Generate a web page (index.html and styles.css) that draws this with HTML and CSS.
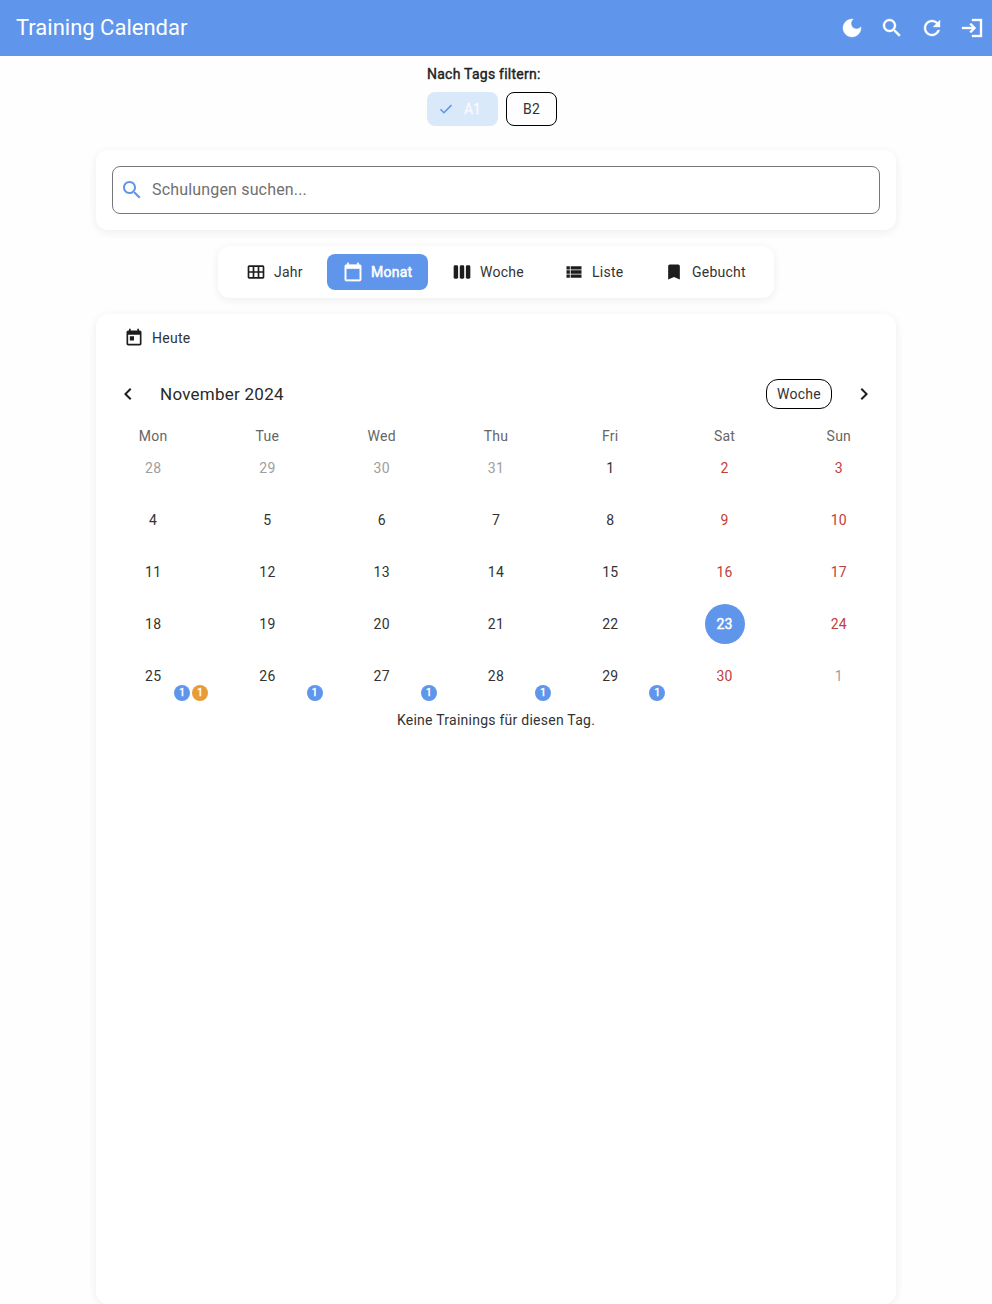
FILE: index.html
```html
<!DOCTYPE html>
<html lang="de">
<head>
<meta charset="utf-8">
<title>Training Calendar</title>
<link rel="stylesheet" href="styles.css">
</head>
<body>
<header class="appbar">
  <h1 class="title">Training Calendar</h1>
  <nav class="actions">
    <svg class="icon24" viewBox="0 0 24 24"><path d="M12 3c-4.97 0-9 4.03-9 9s4.03 9 9 9 9-4.03 9-9c0-.46-.04-.92-.1-1.36-.98 1.37-2.58 2.26-4.4 2.26-2.98 0-5.4-2.42-5.4-5.4 0-1.81.89-3.42 2.26-4.4-.44-.06-.9-.1-1.36-.1z"/></svg>
    <svg class="icon24" viewBox="0 0 24 24"><path d="M15.5 14h-.79l-.28-.27C15.41 12.59 16 11.11 16 9.5 16 5.91 13.09 3 9.5 3S3 5.91 3 9.5 5.91 16 9.5 16c1.61 0 3.09-.59 4.23-1.57l.27.28v.79l5 4.99L20.49 19l-4.99-5zm-6 0C7.01 14 5 11.99 5 9.5S7.01 5 9.5 5 14 7.01 14 9.5 11.99 14 9.5 14z"/></svg>
    <svg class="icon24" viewBox="0 0 24 24"><path d="M17.65 6.35C16.2 4.9 14.21 4 12 4c-4.42 0-7.99 3.58-7.99 8s3.57 8 7.99 8c3.73 0 6.84-2.55 7.73-6h-2.08c-.82 2.33-3.04 4-5.65 4-3.31 0-6-2.69-6-6s2.69-6 6-6c1.66 0 3.14.69 4.22 1.78L13 11h7V4l-2.35 2.35z"/></svg>
    <svg class="icon24" viewBox="0 0 24 24"><path d="M11 7L9.6 8.4l2.6 2.6H2v2h10.2l-2.6 2.6L11 17l5-5-5-5zm9 12h-8v2h10V3H12v2h8v14z"/></svg>
  </nav>
</header>
<main class="content">
  <section class="tags">
    <div class="tags-label">Nach Tags filtern:</div>
    <div class="chips">
      <span class="chip selected"><svg class="check" viewBox="0 0 18 18"><path d="M3.5 9.3l3.4 3.4 7.6-7.6"/></svg><span>A1</span></span>
      <span class="chip">B2</span>
    </div>
  </section>
  <section class="card search-card">
    <div class="search">
      <svg class="icon24" viewBox="0 0 24 24"><path d="M15.5 14h-.79l-.28-.27C15.41 12.59 16 11.11 16 9.5 16 5.91 13.09 3 9.5 3S3 5.91 3 9.5 5.91 16 9.5 16c1.61 0 3.09-.59 4.23-1.57l.27.28v.79l5 4.99L20.49 19l-4.99-5zm-6 0C7.01 14 5 11.99 5 9.5S7.01 5 9.5 5 14 7.01 14 9.5 11.99 14 9.5 14z"/></svg>
      <span>Schulungen suchen...</span>
    </div>
  </section>
  <nav class="card views">
    <span class="view jahr"><svg class="icon20" viewBox="0 0 24 24"><path d="M20 4H4c-1.1 0-2 .9-2 2v12c0 1.1.9 2 2 2h16c1.1 0 2-.9 2-2V6c0-1.1-.9-2-2-2zM8 11H4V6h4v5zm6 0h-4V6h4v5zm6 0h-4V6h4v5zM8 18H4v-5h4v5zm6 0h-4v-5h4v5zm6 0h-4v-5h4v5z"/></svg>Jahr</span>
    <span class="view active"><svg class="icon20" viewBox="0 0 24 24"><path d="M20 3h-1V1h-2v2H7V1H5v2H4c-1.1 0-2 .9-2 2v16c0 1.1.9 2 2 2h16c1.1 0 2-.9 2-2V5c0-1.1-.9-2-2-2zm0 18H4V8h16v13z"/></svg>Monat</span>
    <span class="view woche"><svg class="icon20" viewBox="0 0 24 24"><rect x="2" y="4" width="5.33" height="16" rx="1.6"/><rect x="9.33" y="4" width="5.33" height="16" rx="1.6"/><rect x="16.67" y="4" width="5.33" height="16" rx="1.6"/></svg>Woche</span>
    <span class="view liste"><svg class="icon20" viewBox="0 0 24 24"><path d="M3 14h4v-4H3v4zm0 5h4v-4H3v4zM3 9h4V5H3v4zm5 5h13v-4H8v4zm0 5h13v-4H8v4zM8 5v4h13V5H8z"/></svg>Liste</span>
    <span class="view gebucht"><svg class="icon20" viewBox="0 0 24 24"><path d="M17 3H7c-1.1 0-1.99.9-1.99 2L5 21l7-3 7 3V5c0-1.1-.9-2-2-2z"/></svg>Gebucht</span>
  </nav>
  <section class="card calendar">
    <div class="today"><svg class="icon20" viewBox="0 0 24 24"><path d="M19 3h-1V1h-2v2H8V1H6v2H5c-1.11 0-1.99.9-1.99 2L3 19c0 1.1.89 2 2 2h14c1.1 0 2-.9 2-2V5c0-1.1-.9-2-2-2zm0 16H5V8h14v11zM7 10h5v5H7z"/></svg>Heute</div>
    <div class="month-bar">
      <svg class="icon24" viewBox="0 0 24 24"><path d="M15.41 7.41L14 6l-6 6 6 6 1.41-1.41L10.83 12z"/></svg>
      <h2 class="month">November 2024</h2>
      <span class="format">Woche</span>
      <svg class="icon24" viewBox="0 0 24 24"><path d="M10 6L8.59 7.41 13.17 12l-4.58 4.59L10 18l6-6z"/></svg>
    </div>
    <div class="grid weekdays"><span>Mon</span><span>Tue</span><span>Wed</span><span>Thu</span><span>Fri</span><span>Sat</span><span>Sun</span></div>
    <div class="grid days">
      <span class="day out">28</span><span class="day out">29</span><span class="day out">30</span><span class="day out">31</span><span class="day">1</span><span class="day we">2</span><span class="day we">3</span>
      <span class="day">4</span><span class="day">5</span><span class="day">6</span><span class="day">7</span><span class="day">8</span><span class="day we">9</span><span class="day we">10</span>
      <span class="day">11</span><span class="day">12</span><span class="day">13</span><span class="day">14</span><span class="day">15</span><span class="day we">16</span><span class="day we">17</span>
      <span class="day">18</span><span class="day">19</span><span class="day">20</span><span class="day">21</span><span class="day">22</span><span class="day"><b class="current">23</b></span><span class="day we">24</span>
      <span class="day">25<span class="markers"><i class="dot">1</i><i class="dot orange">1</i></span></span><span class="day">26<span class="markers"><i class="dot">1</i></span></span><span class="day">27<span class="markers"><i class="dot">1</i></span></span><span class="day">28<span class="markers"><i class="dot">1</i></span></span><span class="day">29<span class="markers"><i class="dot">1</i></span></span><span class="day we">30</span><span class="day out">1</span>
    </div>
    <p class="empty">Keine Trainings für diesen Tag.</p>
  </section>
</main>
</body>
</html>
```
FILE: styles.css
```css
* { box-sizing: border-box; }
body {
  margin: 0;
  height: 1304px;
  overflow: hidden;
  background: #fefefe;
  color: #333;
  font: 14px/20px Roboto, sans-serif;
  letter-spacing: 0.25px;
}
svg { display: block; flex: none; fill: #1d1d1d; }
.icon24 { width: 24px; height: 24px; }
.icon20 { width: 20px; height: 20px; }
.appbar {
  height: 56px;
  padding: 0 8px 0 16px;
  display: flex;
  align-items: center;
  justify-content: space-between;
  background: #5f96eb;
  color: #fff;
}
.title { margin: 0; font-size: 22px; line-height: 28px; font-weight: 400; letter-spacing: 0; }
.actions { display: flex; gap: 16px; }
.actions svg { fill: #fff; stroke: #fff; stroke-width: 0.35; }
.content { display: flex; flex-direction: column; align-items: center; }
.tags { width: 138px; height: 94px; padding-top: 8px; }
.tags-label { white-space: nowrap; -webkit-text-stroke: 0.4px; color: #212121; }
.chips { display: flex; gap: 8px; margin-top: 8px; }
.chip {
  display: flex;
  align-items: center;
  justify-content: center;
  width: 51px;
  height: 34px;
  border: 1px solid #000;
  border-radius: 8px;
  letter-spacing: 0.1px;
}
.chip.selected { width: 71px; border: 0; background: #dae9fa; color: #f8fbff; gap: 9px; -webkit-text-stroke: 0.3px; padding-right: 7px; }
.check { width: 18px; height: 18px; fill: none; stroke: #5f96eb; stroke-width: 1.6; }
.card { background: #fff; border-radius: 12px; box-shadow: 0 2px 10px rgba(0, 0, 0, 0.07); }
.search-card { width: 800px; height: 80px; padding: 16px; }
.search {
  height: 48px;
  border: 1px solid #777;
  border-radius: 8px;
  display: flex;
  align-items: center;
  gap: 8px;
  padding: 0 7px;
  color: #707070;
  font-size: 16px;
  letter-spacing: 0.17px;
}
.search svg { fill: #5f96eb; }
.views { display: flex; width: 556px; height: 52px; margin: 16px 0; padding: 8px; gap: 8px; }
.view { display: flex; align-items: center; gap: 8px; height: 36px; padding-left: 16px; border-radius: 8px; }
.jahr { width: 93px; padding-left: 20px; }
.jahr svg, .gebucht svg { margin: 0 0.5px 0 -0.5px; }
.active { width: 101px; background: #5f96eb; color: #fff; -webkit-text-stroke: 0.5px; }
.active svg { fill: #fff; stroke: #fff; stroke-width: 0.3; }
.woche { width: 104px; }
.liste { width: 92px; }
.gebucht { width: 110px; }
.calendar { width: 800px; height: 990px; }
.today { display: flex; align-items: center; gap: 8px; height: 48px; padding-left: 28px; }
.month-bar { display: flex; align-items: center; height: 64px; padding: 0 20px; }
.month { flex: 1; margin: 0 0 0 20px; font-size: 17px; font-weight: 400; letter-spacing: 0.25px; color: #2a2a2a; }
.format { width: 66px; height: 30px; margin-right: 20px; border: 1px solid #000; border-radius: 12px; text-align: center; line-height: 28px; }
.grid { display: grid; grid-template-columns: repeat(7, 1fr); text-align: center; }
.weekdays { height: 16px; line-height: 20px; color: #666; }
.days { grid-auto-rows: 52px; }
.day { position: relative; display: flex; align-items: center; justify-content: center; }
.out { color: #9e9e9e; }
.we { color: #c0403c; }
.current { width: 40px; height: 40px; line-height: 40px; border-radius: 50%; text-align: center; background: #5f96eb; color: #fff; font-weight: 400; -webkit-text-stroke: 0.5px; }
.markers { position: absolute; right: 2px; bottom: 1px; display: flex; gap: 2px; }
.dot { width: 16px; height: 16px; border-radius: 50%; background: #5f96eb; color: #fff; text-align: center; font: 10px/16px Roboto, sans-serif; -webkit-text-stroke: 0.5px; }
.orange { background: #e89c36; }
.empty { margin: 8px 0 0; text-align: center; }
```
